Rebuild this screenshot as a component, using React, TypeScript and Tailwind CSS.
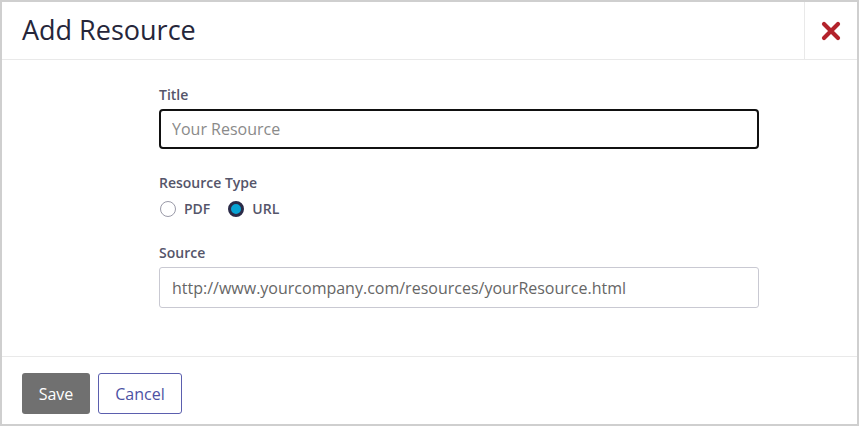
import { useState } from 'react'

function CloseIcon() {
  return (
    <svg width="20" height="20" viewBox="0 0 20 20" aria-hidden="true">
      <path d="M3 3 L17 17 M17 3 L3 17" stroke="#b3222b" strokeWidth="4.2" strokeLinecap="round" />
    </svg>
  )
}

function Radio({ label, checked, onClick }: { label: string; checked: boolean; onClick: () => void }) {
  return (
    <label className="flex items-center gap-2 cursor-pointer" onClick={onClick}>
      {checked ? (
        <span className="w-4 h-4 rounded-full border-[3px] border-[#2b2b48] bg-[#08a3d4] box-border" />
      ) : (
        <span className="w-4 h-4 rounded-full border border-[#9a9aa8] bg-white box-border" />
      )}
      <span className="text-sm font-semibold text-[#55556a]">{label}</span>
    </label>
  )
}

export default function App() {
  const [type, setType] = useState<'pdf' | 'url'>('url')

  return (
    <div className="w-[859px] h-[426px] border-2 border-[#cfcfcf] bg-white flex flex-col font-['Open_Sans',sans-serif]">
      {/* Header */}
      <div className="h-[58px] flex border-b border-[#e9e9e9] shrink-0">
        <h1 className="flex-1 flex items-center pl-5 pb-[2px] text-[27px] text-[#26263a] leading-none">Add Resource</h1>
        <button className="w-[53px] h-full flex items-center justify-center border-l border-[#e9e9e9]">
          <CloseIcon />
        </button>
      </div>

      {/* Body */}
      <div className="flex-1 pt-[25px]">
        <div className="ml-[157px] w-[600px] flex flex-col">
          <label className="text-sm leading-[19px] font-semibold text-[#55556a]">Title</label>
          <input
            className="mt-[5px] h-10 border-2 border-[#111] rounded-[4px] px-[11px] text-base text-[#333] placeholder:text-[#8a8a8a] outline-none"
            placeholder="Your Resource"
          />

          <label className="mt-[24px] text-sm leading-[19px] font-semibold text-[#55556a]">Resource Type</label>
          <div className="mt-[7px] h-5 flex items-center gap-[18px] pl-px">
            <Radio label="PDF" checked={type === 'pdf'} onClick={() => setType('pdf')} />
            <Radio label="URL" checked={type === 'url'} onClick={() => setType('url')} />
          </div>

          <label className="mt-[24px] text-sm leading-[19px] font-semibold text-[#55556a]">Source</label>
          <input
            className="mt-[5px] h-[41px] border border-[#c9c9d2] rounded-[3px] px-3 text-base text-[#666] placeholder:text-[#666] outline-none"
            placeholder="http://www.yourcompany.com/resources/yourResource.html"
          />
        </div>
      </div>

      {/* Footer */}
      <div className="h-[68px] shrink-0 border-t border-[#e9e9e9] flex items-start gap-2 pl-5 pt-4">
        <button className="h-[41px] w-[68px] rounded-[3px] bg-[#707070] text-white text-base">Save</button>
        <button className="h-[41px] w-[84px] rounded-[3px] border border-[#5b5fae] bg-white text-[#4d51a3] text-base">Cancel</button>
      </div>
    </div>
  )
}
